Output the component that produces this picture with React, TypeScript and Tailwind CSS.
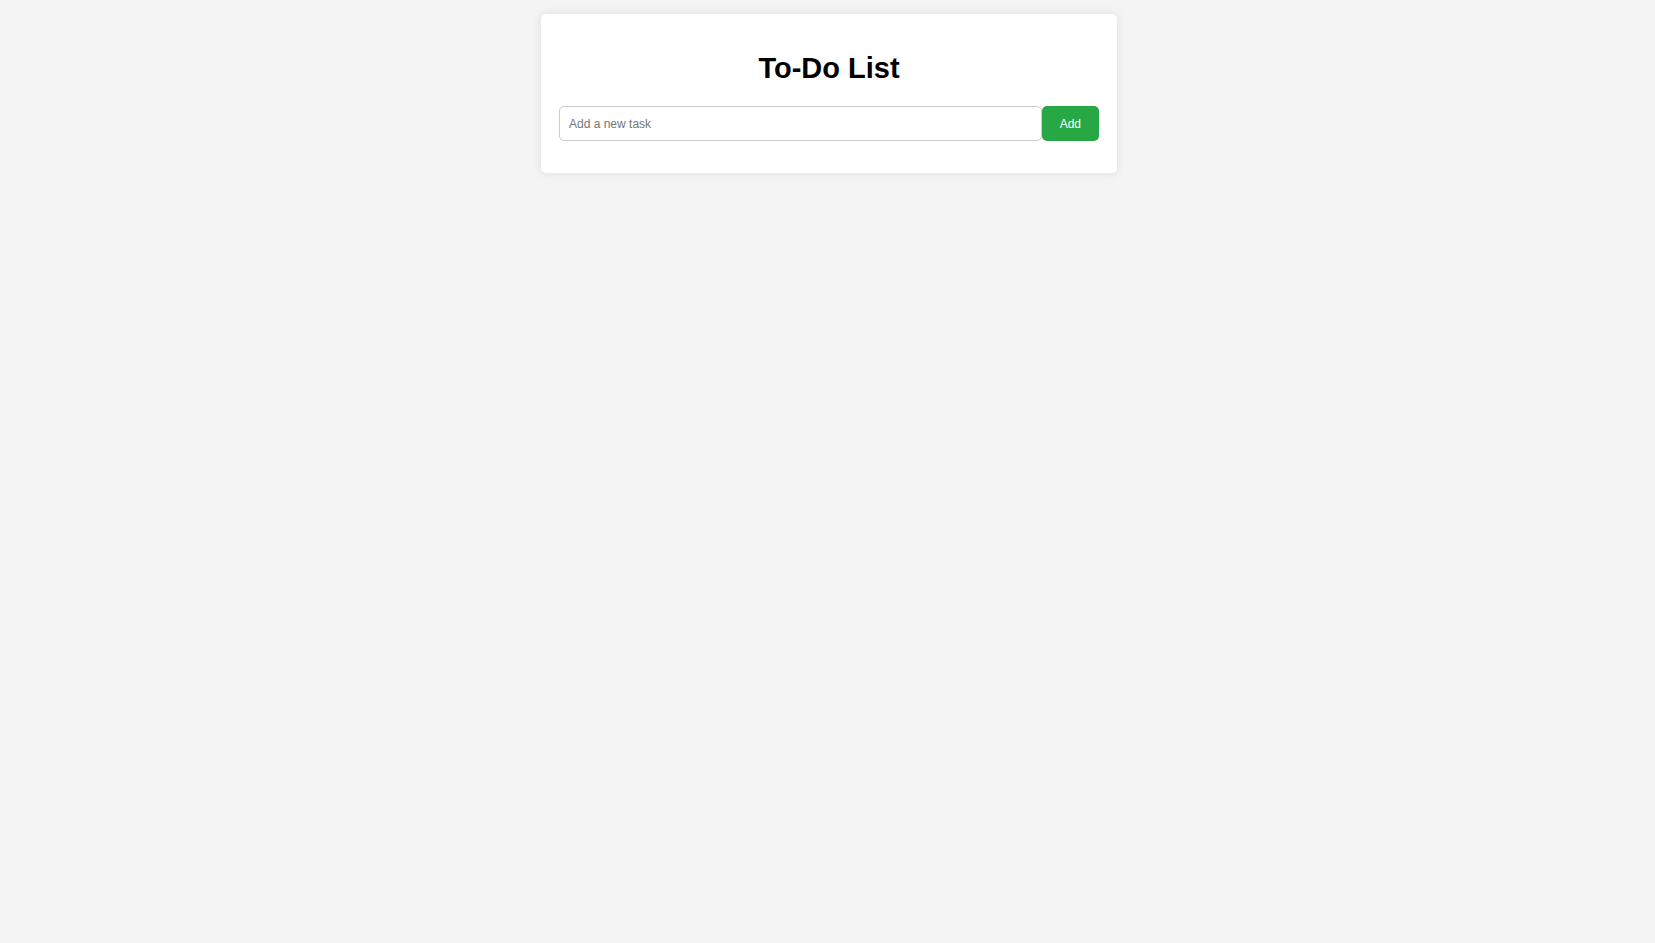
import { useState, type FormEvent } from "react";

export default function App() {
  const [tasks, setTasks] = useState<string[]>([]);
  const [text, setText] = useState("");

  const addTask = (event: FormEvent) => {
    event.preventDefault();
    if (!text.trim()) return;
    setTasks([...tasks, text.trim()]);
    setText("");
  };

  return (
    <div className="min-h-screen bg-[#f4f4f4] pt-3.5 pr-[13px] pl-4 font-['Liberation_Sans',Arial,sans-serif]">
      <main className="mx-auto w-full max-w-[576px] rounded-[5px] bg-white px-[18px] pt-9 pb-8 shadow-[0_0_10px_rgba(0,0,0,0.1)]">
        <h1 className="mb-5 text-center text-[29px] leading-9 font-bold text-black">To-Do List</h1>
        <form className="flex" onSubmit={addTask}>
          <input
            type="text"
            aria-label="Add a new task"
            placeholder="Add a new task"
            value={text}
            onChange={(event) => setText(event.target.value)}
            className="h-[35px] min-w-0 flex-1 rounded-[5px] border border-[#cccccc] bg-white px-[9px] text-[12px] text-black placeholder:text-[#757575]"
          />
          <button type="submit" className="h-[35px] rounded-[5px] bg-[#28a745] px-[18px] text-[12px] text-white">
            Add
          </button>
        </form>
        {tasks.length > 0 && (
          <ul className="mt-5">
            {tasks.map((task, index) => (
              <li key={index} className="border-b border-[#dddddd] p-2 text-sm">
                {task}
              </li>
            ))}
          </ul>
        )}
      </main>
    </div>
  );
}
